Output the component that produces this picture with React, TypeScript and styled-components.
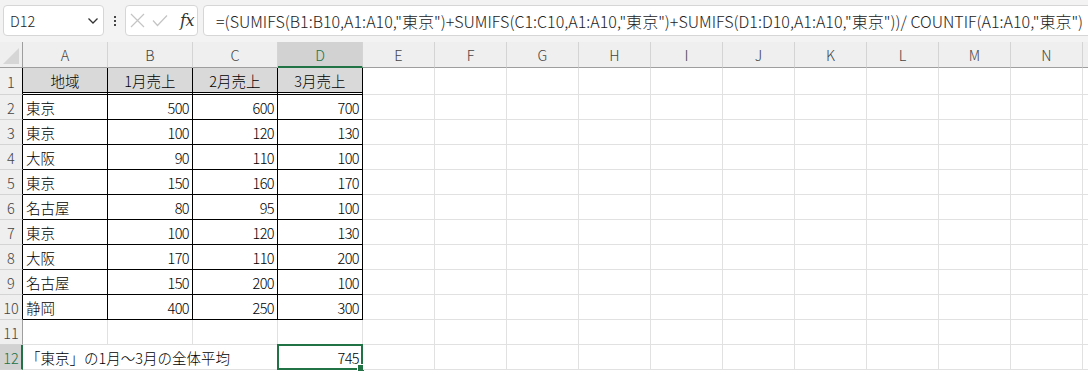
import React from 'react';
import styled, { createGlobalStyle } from 'styled-components';

const GREEN = '#217346';
const FONT = `"Noto Sans CJK JP", "Noto Sans", sans-serif`;

const GlobalStyle = createGlobalStyle`
  html, body { margin: 0; padding: 0; background: #fff; overflow: hidden; }
  body { font-family: ${FONT}; font-weight: 300; }
`;

const Page = styled.div`
  width: 1088px;
  height: 371px;
  overflow: hidden;
  background: #fff;
`;

const Toolbar = styled.div`
  display: flex;
  align-items: flex-start;
  height: 42px;
  box-sizing: border-box;
  padding: 5px 0 0 3px;
  background: #f3f3f3;
  overflow: hidden;
`;

const NameBox = styled.div`
  box-sizing: border-box;
  flex: 0 0 101px;
  height: 31px;
  background: #fff;
  border: 1px solid #d6d6d6;
  border-radius: 4px;
  display: flex;
  align-items: center;
  justify-content: space-between;
  padding: 0 4px 0 6px;
  font-size: 14.5px;
  color: #222;
`;

const Dots = styled.div`
  flex: 0 0 21px;
  height: 31px;
  display: flex;
  flex-direction: column;
  align-items: center;
  justify-content: center;
  gap: 2px;
`;

const Dot = styled.span`
  width: 2px;
  height: 2px;
  background: #444;
`;

const FxBox = styled.div`
  box-sizing: border-box;
  flex: 0 0 73px;
  height: 31px;
  background: #fff;
  border: 1px solid #d6d6d6;
  border-radius: 4px;
  display: flex;
  align-items: center;
  padding: 0 0 0 4px;
  gap: 7px;
`;

const FxText = styled.span`
  font-family: "DejaVu Serif", "Liberation Serif", serif;
  font-style: italic;
  font-size: 16px;
  color: #333;
  margin-left: 5px;
  letter-spacing: -0.5px;
`;

const FormulaBox = styled.div`
  box-sizing: border-box;
  flex: 1 0 auto;
  margin-left: 5px;
  margin-right: -20px;
  height: 31px;
  background: #fff;
  border: 1px solid #d6d6d6;
  border-radius: 4px;
  display: flex;
  align-items: center;
  padding-left: 12px;
  font-size: 16.05px;
  color: #222;
  white-space: nowrap;
  overflow: hidden;
`;

const Grid = styled.div`
  display: grid;
  grid-template-columns: 23px repeat(4, 85px) repeat(10, 72px) 1fr;
  grid-template-rows: 26px 27px repeat(11, 25px);
  font-size: 14.5px;
`;

const Corner = styled.div`
  box-sizing: border-box;
  background: #efefef;
  border-right: 1px solid #9e9e9e;
  border-bottom: 1px solid #9e9e9e;
  display: flex;
  align-items: flex-end;
  justify-content: flex-end;
  padding: 0 3px 3px 0;
`;

const ColHeader = styled.div<{ $sel?: boolean }>`
  box-sizing: border-box;
  background: ${(p) => (p.$sel ? '#d2d2d2' : '#efefef')};
  border-right: 1px solid #d4d4d4;
  border-bottom: ${(p) => (p.$sel ? `2px solid ${GREEN}` : '1px solid #9e9e9e')};
  color: ${(p) => (p.$sel ? GREEN : '#444')};
  display: flex;
  align-items: center;
  justify-content: center;
  font-size: 14.5px;
  padding-top: ${(p) => (p.$sel ? '1px' : '0')};
`;

const RowHeader = styled.div<{ $sel?: boolean; $edge?: boolean }>`
  box-sizing: border-box;
  background: ${(p) => (p.$sel ? '#d2d2d2' : '#efefef')};
  border-right: ${(p) =>
    p.$sel ? `2px solid ${GREEN}` : p.$edge ? '1px solid #000' : '1px solid #9e9e9e'};
  border-bottom: 1px solid #d4d4d4;
  color: ${(p) => (p.$sel ? GREEN : '#444')};
  display: flex;
  align-items: center;
  justify-content: center;
  font-size: 14.5px;
  padding-left: ${(p) => (p.$sel ? '1px' : '0')};
`;

const Cell = styled.div<{
  $align?: 'left' | 'right' | 'center';
  $head?: boolean;
  $edge?: boolean;
  $double?: boolean;
  $span?: number;
}>`
  box-sizing: border-box;
  position: relative;
  background: ${(p) => (p.$head ? '#d9d9d9' : '#fff')};
  background-clip: padding-box;
  border-right: 1px solid ${(p) => (p.$edge ? '#000' : '#e1e1e1')};
  border-bottom: ${(p) =>
    p.$double ? '3px double #000' : `1px solid ${p.$edge ? '#000' : '#e1e1e1'}`};
  grid-column: ${(p) => (p.$span ? `span ${p.$span}` : 'auto')};
  display: flex;
  align-items: center;
  justify-content: ${(p) =>
    p.$align === 'right' ? 'flex-end' : p.$align === 'center' ? 'center' : 'flex-start'};
  padding: 1px 3px 0 3px;
  color: #000;
  white-space: nowrap;
  overflow: visible;
`;

const Num = styled.span`
  letter-spacing: -0.6px;
`;

const Selection = styled.div`
  position: absolute;
  top: -1px;
  left: -1px;
  right: -1px;
  bottom: -1px;
  border: 2px solid ${GREEN};
  pointer-events: none;
`;

const FillHandle = styled.div`
  position: absolute;
  right: -4px;
  bottom: -4px;
  width: 6px;
  height: 6px;
  background: ${GREEN};
  border: 1px solid #fff;
`;

const cols = ['A', 'B', 'C', 'D', 'E', 'F', 'G', 'H', 'I', 'J', 'K', 'L', 'M', 'N', ''];

const data: [string, number, number, number][] = [
  ['東京', 500, 600, 700],
  ['東京', 100, 120, 130],
  ['大阪', 90, 110, 100],
  ['東京', 150, 160, 170],
  ['名古屋', 80, 95, 100],
  ['東京', 100, 120, 130],
  ['大阪', 170, 110, 200],
  ['名古屋', 150, 200, 100],
  ['静岡', 400, 250, 300],
];

const emptyCols = 11; // E..N + rest

const Chevron = () => (
  <svg width="12" height="8" viewBox="0 0 12 8">
    <polyline points="1.5,1.5 6,6 10.5,1.5" fill="none" stroke="#333" strokeWidth="1.3" />
  </svg>
);

const Cross = () => (
  <svg width="15" height="15" viewBox="0 0 15 15">
    <path d="M1 1 L14 14 M14 1 L1 14" stroke="#c4c4c4" strokeWidth="1.2" />
  </svg>
);

const Check = () => (
  <svg width="16" height="13" viewBox="0 0 16 13">
    <polyline points="1,6.5 5.5,11.5 15,1.5" fill="none" stroke="#c4c4c4" strokeWidth="1.2" />
  </svg>
);

const Triangle = () => (
  <svg width="16" height="16" viewBox="0 0 16 16">
    <polygon points="16,0 16,16 0,16" fill="#d6d6d6" />
  </svg>
);

const EmptyCells = ({ row }: { row: number }) => (
  <>
    {Array.from({ length: emptyCols }).map((_, i) => (
      <Cell key={`e${row}-${i}`} />
    ))}
  </>
);

export default function App() {
  return (
    <Page>
      <GlobalStyle />
      <Toolbar>
        <NameBox>
          <span>D12</span>
          <Chevron />
        </NameBox>
        <Dots>
          <Dot />
          <Dot />
          <Dot />
        </Dots>
        <FxBox>
          <Cross />
          <Check />
          <FxText>fx</FxText>
        </FxBox>
        <FormulaBox>
          =(SUMIFS(B1:B10,A1:A10,"東京")+SUMIFS(C1:C10,A1:A10,"東京")+SUMIFS(D1:D10,A1:A10,"東京"))/ COUNTIF(A1:A10,"東京")
        </FormulaBox>
      </Toolbar>
      <Grid>
        <Corner>
          <Triangle />
        </Corner>
        {cols.map((c, i) => (
          <ColHeader key={`h${i}`} $sel={c === 'D'}>
            {c}
          </ColHeader>
        ))}

        <RowHeader $edge>1</RowHeader>
        {['地域', '1月売上', '2月売上', '3月売上'].map((t) => (
          <Cell key={t} $head $edge $double $align="center">
            {t}
          </Cell>
        ))}
        <EmptyCells row={1} />

        {data.map((r, i) => (
          <React.Fragment key={`r${i}`}>
            <RowHeader $edge>{i + 2}</RowHeader>
            <Cell $edge>{r[0]}</Cell>
            <Cell $edge $align="right">
              <Num>{r[1]}</Num>
            </Cell>
            <Cell $edge $align="right">
              <Num>{r[2]}</Num>
            </Cell>
            <Cell $edge $align="right">
              <Num>{r[3]}</Num>
            </Cell>
            <EmptyCells row={i + 2} />
          </React.Fragment>
        ))}

        <RowHeader>11</RowHeader>
        <Cell />
        <Cell />
        <Cell />
        <Cell />
        <EmptyCells row={11} />

        <RowHeader $sel>12</RowHeader>
        <Cell $span={3}>「東京」の1月～3月の全体平均</Cell>
        <Cell $align="right">
          <Num>745</Num>
          <Selection>
            <FillHandle />
          </Selection>
        </Cell>
        <EmptyCells row={12} />
      </Grid>
    </Page>
  );
}
